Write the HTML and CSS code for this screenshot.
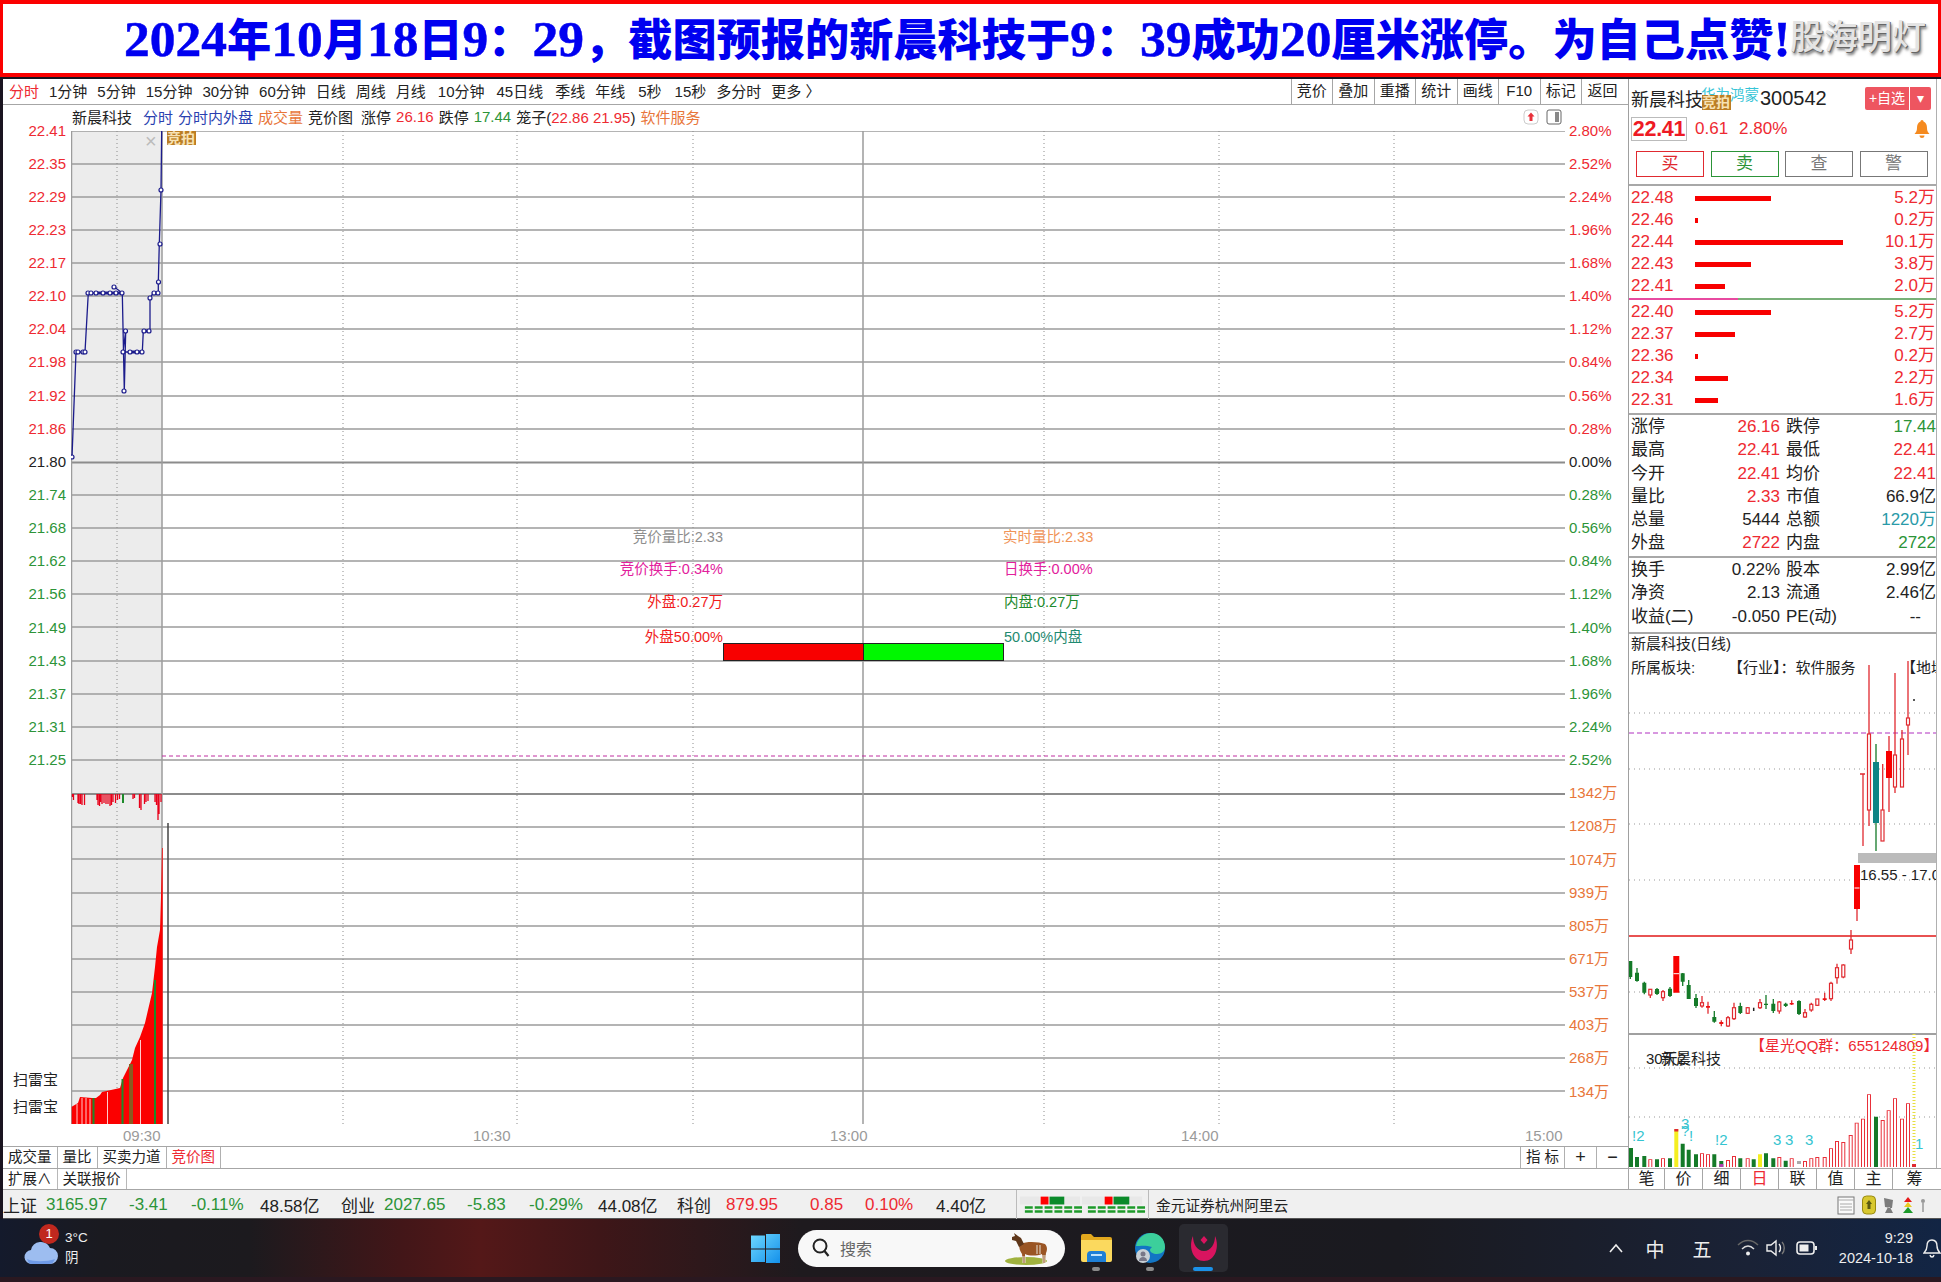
FILE: index.html
```html
<!DOCTYPE html>
<html lang="zh">
<head>
<meta charset="utf-8">
<title>新晨科技</title>
<link rel="stylesheet" href="styles.css">
</head>
<body>
<header class="banner">
  <h1 class="headline"><span class="n">2024</span>年<span class="n">10</span>月<span class="n">18</span>日<span class="n">9</span>：<span class="n">29</span>，截图预报的新晨科技于<span class="n">9</span>：<span class="n">39</span>成功<span class="n">20</span>厘米涨停。为自己点赞<span class="bang">!</span></h1>
  <span class="mark">股海明灯</span>
</header>
<div class="app">
  <div class="top">
    <section class="pane">
      <nav class="toolbar">
        <span class="r">分时</span><span>1分钟</span><span>5分钟</span><span>15分钟</span><span>30分钟</span><span>60分钟</span><span>日线</span><span>周线</span><span>月线</span><span class="shift">10分钟</span><span class="shift">45日线</span><span class="shift">季线</span><span>年线</span><span class="shift2">5秒</span><span class="shift2">15秒</span><span>多分时</span><span>更多 〉</span>
        <div class="tools"><span>竞价</span><span>叠加</span><span>重播</span><span>统计</span><span>画线</span><span>F10</span><span>标记</span><span>返回</span></div>
      </nav>
      <div class="infobar">
        <span class="i-name">新晨科技</span><span class="b i-wide">分时</span><span class="b">分时内外盘</span><span class="o">成交量</span><span>竞价图</span><span class="i-wide2">涨停</span><span class="r">26.16</span><span>跌停</span><span class="g">17.44</span><span>笼子(<span class="r">22.86 21.95</span>)</span><span class="o">软件服务</span>
        <div class="i-icons">
          <svg width="16" height="16" viewBox="0 0 16 16"><rect x="1" y="1" width="14" height="14" rx="4" fill="#fff" stroke="#ccc"/><path d="M8 3.5l3.5 4H9.5V12h-3V7.500H4.500z" fill="#e8303a"/></svg>
          <svg width="16" height="16" viewBox="0 0 16 16"><rect x="1" y="1" width="14" height="14" rx="2" fill="#fff" stroke="#666"/><rect x="9" y="3" width="4" height="10" fill="#888"/></svg>
        </div>
      </div>
      <div class="plot">
        <div class="axis axis-left">
          <span class="r">22.41</span><span class="r">22.35</span><span class="r">22.29</span><span class="r">22.23</span><span class="r">22.17</span><span class="r">22.10</span><span class="r">22.04</span><span class="r">21.98</span><span class="r">21.92</span><span class="r">21.86</span><span>21.80</span><span class="g">21.74</span><span class="g">21.68</span><span class="g">21.62</span><span class="g">21.56</span><span class="g">21.49</span><span class="g">21.43</span><span class="g">21.37</span><span class="g">21.31</span><span class="g">21.25</span>
          <div class="scan"><span>扫雷宝</span><span>扫雷宝</span></div>
        </div>
        <svg class="chart" width="1494" height="993" viewBox="71 131 1494 993">
          <rect x="71" y="131" width="91" height="993" fill="#ececec"/>
          <path d="M71 131H1565M71 164H1565M71 197H1565M71 230H1565M71 263H1565M71 296H1565M71 329H1565M71 362H1565M71 396H1565M71 429H1565M71 495H1565M71 528H1565M71 561H1565M71 594H1565M71 627H1565M71 661H1565M71 694H1565M71 727H1565M71 760H1565M71 827H1565M71 859H1565M71 893H1565M71 926H1565M71 959H1565M71 992H1565M71 1025H1565M71 1058H1565M71 1091H1565" stroke="#9c9c9c" stroke-width="1.400" fill="none"/>
          <path d="M71 462.500H1565M71 794H1565" stroke="#8c8c8c" stroke-width="2" fill="none"/>
          <path d="M117 131V1124M343 131V1124M517 131V1124M693 131V1124M1044 131V1124M1219 131V1124M1394 131V1124" stroke="#8c8c8c" stroke-dasharray="1 3" fill="none"/>
          <path d="M71.500 131V1124M162 131V1124M863 131V1124" stroke="#9c9c9c" stroke-width="1.500" fill="none"/>
          <path d="M162 756H1565" stroke="#c02fa0" stroke-dasharray="4 3" fill="none"/>
          <path d="M168 823V1124" stroke="#444" stroke-width="1.500"/>
          <text class="x-mark" x="145" y="148">×</text>
          <rect x="167" y="131" width="29" height="14" fill="#bb7d24"/>
          <text class="badge" x="167" y="143">竞拍</text>
          <path d="M72 457L76 352H85L88.300 293H122.300L114.300 287L122.300 293L124.300 391L125.700 331L123 352H142.300L143.300 331H150L150 298L153.300 293H158.300L158.300 282L159.300 244L161 190L161.700 130" fill="none" stroke="#1c1c8c" stroke-width="1.300"/>
          <path d="M94 293H120M128 352H141M144 331H149" stroke="#1c1c8c" stroke-width="3"/>
          <g fill="#fff" stroke="#1c1c8c" stroke-width="1.200">
            <circle cx="72" cy="457" r="2"/><circle cx="76" cy="352" r="2"/><circle cx="78" cy="352" r="2"/><circle cx="83" cy="352" r="2"/><circle cx="85" cy="352" r="2"/><circle cx="88" cy="293" r="2"/><circle cx="91" cy="293" r="2"/><circle cx="96" cy="293" r="2"/><circle cx="103" cy="293" r="2"/><circle cx="110" cy="293" r="2"/><circle cx="114" cy="287" r="2"/><circle cx="116" cy="293" r="2"/><circle cx="122" cy="293" r="2"/><circle cx="124" cy="391" r="2"/><circle cx="125.500" cy="331" r="2"/><circle cx="123" cy="352" r="2"/><circle cx="130" cy="352" r="2"/><circle cx="137" cy="352" r="2"/><circle cx="142" cy="352" r="2"/><circle cx="144" cy="331" r="2"/><circle cx="149" cy="331" r="2"/><circle cx="150" cy="298" r="2"/><circle cx="154" cy="293" r="2"/><circle cx="158" cy="293" r="2"/><circle cx="158.500" cy="282" r="2"/><circle cx="160" cy="244" r="2"/><circle cx="161" cy="190" r="2"/>
          </g>
          <path d="M72.500 794v3M73.500 794v6M78 794v9M79 794v10M80.500 794v10M82 794v11M84.500 794v11M97 794v6M98 794v11M99.500 794v12M100.500 794v8M102 794v10M104 794v9M106 794v10M108 794v10M110 794v12M111.500 794v11M113 794v8M115.500 794v9M117.500 794v6M119.500 794v5M133 794v5M134.500 794v4M139.500 794v14M141 794v16M144.500 794v10M146 794v8M148 794v7M155 794v8M156.500 794v11M158 794v26M159 794v20M161 794v8" stroke="#e8001a" stroke-width="1.300" fill="none"/>
          <rect x="122" y="794" width="2" height="9" fill="#1d8a2a"/>
          <polygon points="71.700,1106.700 78,1103 80,1097 92,1098 96,1098 100,1095 102,1092 120,1088 123,1078 127,1070 132,1060 135,1048 140,1037 145,1023 148,1010 152,993 155,967 157,947 160,930 161,897 162,848 162.700,848 162.700,1124 71.700,1124" fill="#fb0000"/>
          <path d="M77 1104V1124M82 1098V1124M86 1098V1124M90 1099V1124M107.500 1092V1124M140.500 1040V1124" stroke="#fff" stroke-width=".8" fill="none"/>
          <path d="M93.500 1098V1124M122.500 1079V1124M155 980V1124" stroke="#1d8a2a" stroke-width="2" fill="none"/>
          <rect x="129" y="1064" width="4" height="60" fill="#8a5a20"/>
          <text class="s-gray" x="723" y="542">竞价量比:2.33</text>
          <text class="s-pink" x="723" y="574">竞价换手:0.34%</text>
          <text class="s-red" x="723" y="607">外盘:0.27万</text>
          <text class="s-red" x="723" y="642">外盘50.00%</text>
          <text class="s-orange" x="1003" y="542">实时量比:2.33</text>
          <text class="s-pink2" x="1004" y="574">日换手:0.00%</text>
          <text class="s-green" x="1004" y="607">内盘:0.27万</text>
          <text class="s-teal" x="1004" y="642">50.00%内盘</text>
          <rect x="723.500" y="643.500" width="140" height="17" fill="#f80000" stroke="#222"/>
          <rect x="863.500" y="643.500" width="140" height="17" fill="#00f800" stroke="#222"/>
        </svg>
        <div class="axis axis-right">
          <span class="r">2.80%</span><span class="r">2.52%</span><span class="r">2.24%</span><span class="r">1.96%</span><span class="r">1.68%</span><span class="r">1.40%</span><span class="r">1.12%</span><span class="r">0.84%</span><span class="r">0.56%</span><span class="r">0.28%</span><span>0.00%</span><span class="g">0.28%</span><span class="g">0.56%</span><span class="g">0.84%</span><span class="g">1.12%</span><span class="g">1.40%</span><span class="g">1.68%</span><span class="g">1.96%</span><span class="g">2.24%</span><span class="g">2.52%</span><span class="o">1342万</span><span class="o">1208万</span><span class="o">1074万</span><span class="o">939万</span><span class="o">805万</span><span class="o">671万</span><span class="o">537万</span><span class="o">403万</span><span class="o">268万</span><span class="o">134万</span>
        </div>
      </div>
      <div class="timeaxis"><span>09:30</span><span>10:30</span><span>13:00</span><span>14:00</span><span>15:00</span></div>
      <div class="tabs">
        <span>成交量</span><span>量比</span><span>买卖力道</span><span class="r">竞价图</span>
        <div class="tabs-end"><span class="t-ind">指 标</span><span class="t-btn">+</span><span class="t-btn">−</span></div>
      </div>
    </section>
    <aside class="side">
      <div class="s-head">
        <span class="s-name">新晨科技</span>
        <span class="s-tag">华为鸿蒙<span class="s-badge">竞拍</span></span>
        <span class="s-code">300542</span>
        <span class="s-add"><span class="s-add-l">+自选</span><span class="s-add-r">▾</span></span>
      </div>
      <div class="s-price">
        <span class="s-last">22.41</span><span class="r">0.61</span><span class="r">2.80%</span>
        <svg class="s-bell" width="16" height="20" viewBox="0 0 16 20"><path d="M8 1c1 0 1.500.8 1.500 1.600C12 3.500 13 6 13 9c0 3 1 4.500 2.500 6H.5C2 13.500 3 12 3 9c0-3 1-5.500 3.500-6.400C6.500 1.800 7 1 8 1zM5.500 16.500h5C10.300 18.300 9.300 19 8 19s-2.300-.7-2.500-2.500z" fill="#f58a1f"/></svg>
      </div>
      <div class="s-btns"><span class="btn-buy">买</span><span class="btn-sell">卖</span><span class="btn-gray">查</span><span class="btn-gray">警</span></div>
      <div class="book">
        <div class="row"><span>22.48</span><i style="width:76px"></i><span class="v">5.2万</span></div>
        <div class="row"><span>22.46</span><i style="width:3px"></i><span class="v">0.2万</span></div>
        <div class="row"><span>22.44</span><i style="width:148px"></i><span class="v">10.1万</span></div>
        <div class="row"><span>22.43</span><i style="width:56px"></i><span class="v">3.8万</span></div>
        <div class="row"><span>22.41</span><i style="width:30px"></i><span class="v">2.0万</span></div>
      </div>
      <div class="book-sep"></div>
      <div class="book">
        <div class="row"><span>22.40</span><i style="width:76px"></i><span class="v">5.2万</span></div>
        <div class="row"><span>22.37</span><i style="width:40px"></i><span class="v">2.7万</span></div>
        <div class="row"><span>22.36</span><i style="width:3px"></i><span class="v">0.2万</span></div>
        <div class="row"><span>22.34</span><i style="width:33px"></i><span class="v">2.2万</span></div>
        <div class="row"><span>22.31</span><i style="width:23px"></i><span class="v">1.6万</span></div>
      </div>
      <div class="stats first">
        <span>涨停</span><span class="val r">26.16</span><span class="l2">跌停</span><span class="val g">17.44</span>
        <span>最高</span><span class="val r">22.41</span><span class="l2">最低</span><span class="val r">22.41</span>
        <span>今开</span><span class="val r">22.41</span><span class="l2">均价</span><span class="val r">22.41</span>
        <span>量比</span><span class="val r">2.33</span><span class="l2">市值</span><span class="val">66.9亿</span>
        <span>总量</span><span class="val">5444</span><span class="l2">总额</span><span class="val teal">1220万</span>
        <span>外盘</span><span class="val r">2722</span><span class="l2">内盘</span><span class="val g">2722</span>
      </div>
      <div class="stats second">
        <span>换手</span><span class="val">0.22%</span><span class="l2">股本</span><span class="val">2.99亿</span>
        <span>净资</span><span class="val">2.13</span><span class="l2">流通</span><span class="val">2.46亿</span>
        <span>收益(二)</span><span class="val">-0.050</span><span class="l2">PE(动)</span><span class="val dash">--</span>
      </div>
      <div class="kchart">
        <svg class="kplot" width="308" height="535" viewBox="1628 632 308 535">
          <path d="M1628 712H1936M1628 768H1936M1628 823H1936M1628 879H1936M1628 991H1936M1628 1067H1936M1628 1116H1936" stroke="#999" stroke-dasharray="1 4" fill="none"/>
          <path d="M1628 732H1936" stroke="#b030c0" stroke-dasharray="5 3" fill="none"/>
          <path d="M1628 935H1936" stroke="#e01818" stroke-width="1.300"/>
          <path d="M1628 1033H1936" stroke="#a0a0a0" stroke-width="2"/>
          <rect x="1857" y="852" width="79" height="10" fill="#bbb"/>
          <path d="M1862 773V845M1859 773H1864M1868 664V825M1881.700 763V840M1888 735V811M1894 672V792M1901 729V786M1907 660V754M1856 908V920M1850 929V953M1649.300 988V997M1662 989V1000M1701 995V1006.700M1727 1015V1026M1733 1001.700V1019M1746.700 1006V1013M1759 998V1008M1778.300 1000V1012.700M1804 1008V1017M1810.300 1001.700V1010.700M1816.300 998V1005M1830 980.700V1000M1836 962.700V982.700M1842.300 963.300V977.300M1707 1000.700V1012.700M1720.300 1019.300V1025.300M1790.700 999.300V1004M1823.700 991.700V1000" stroke="#e02a30" stroke-width="1.300" fill="none"/>
          <path d="M1875 743V850M1629.300 960V978M1636 967V980.700M1643.300 980.700V993.300M1656 987V994M1669 986V996M1681.700 972V985M1687.700 979V998M1695 993V1007M1713.300 1010V1021.700M1739.300 1001.700V1013M1765 994V1008M1772.300 998V1012M1784.700 1001.700V1006M1798 999.300V1014" stroke="#147a28" stroke-width="1.300" fill="none"/>
          <path d="M1875 761V822" stroke="#0e8585" stroke-width="6"/>
          <path d="M1629.300 960V976M1636 971.700V980M1643.300 981.700V991.700M1656 988V993M1669 987.700V995M1681.700 972.300V980.700M1687.700 984V998M1695 997V1005M1713.300 1016V1020.700M1739.300 1005V1012M1765 1002.700V1004M1772.300 1002.700V1010M1784.700 1002.700V1005M1798 1000V1013" stroke="#147a28" stroke-width="4" fill="none"/>
          <path d="M1888 750V777M1856 864V908M1675.300 955V991.700" stroke="#f80000" stroke-width="6" fill="none"/>
          <path d="M1707 1005V1006.700M1720.300 1021V1023M1790.700 1002V1003.500M1823.700 997.300V999" stroke="#f01010" stroke-width="4" fill="none"/>
          <path d="M1853.500 887H1858.500M1672.500 972.700H1678" stroke="#fff" fill="none"/>
          <path d="M1752.700 1006.700V1010" stroke="#222" stroke-width="1.500"/>
          <circle cx="1913" cy="699" r="1" fill="#222"/>
          <g fill="#fff" stroke="#e02a30" stroke-width="1.200">
            <rect x="1866.500" y="733" width="3" height="76"/><rect x="1880" y="809" width="3" height="31"/><rect x="1892.500" y="754" width="3" height="32"/><rect x="1899.500" y="738" width="3" height="48"/><rect x="1905.500" y="717" width="3" height="7"/><rect x="1848.500" y="939" width="3" height="9"/><rect x="1647.800" y="988.300" width="3" height="5.700"/><rect x="1660.500" y="990.700" width="3" height="6"/><rect x="1699.500" y="1001.700" width="3" height="3.300"/><rect x="1725.500" y="1016.700" width="3" height="8.300"/><rect x="1731.500" y="1006.700" width="3" height="11"/><rect x="1745.200" y="1006.700" width="3" height="5.600"/><rect x="1757.500" y="1001.700" width="3" height="5"/><rect x="1776.800" y="1001" width="3" height="9"/><rect x="1802.500" y="1011.700" width="3" height="4.300"/><rect x="1808.800" y="1003.300" width="3" height="5.700"/><rect x="1814.800" y="998" width="3" height="6.300"/><rect x="1828.500" y="982.300" width="3" height="15.400"/><rect x="1834.500" y="966.700" width="3" height="10"/><rect x="1840.800" y="964" width="3" height="12"/>
          </g>
          <path d="M1630 1166V1147M1636 1166V1156M1643.300 1166V1155M1656 1166V1158.300M1669 1166V1157.300M1681.700 1166V1142.700M1687.700 1166V1148.700M1695 1166V1153.300M1713.300 1166V1153.300M1720.300 1166V1160M1739.300 1166V1157.300M1752.700 1166V1158.300M1765 1166V1152.300M1772.300 1166V1157.300M1784.700 1166V1159.700M1875 1166V1115.700" stroke="#147a28" stroke-width="4" fill="none"/>
          <path d="M1649.300 1166V1158.300M1662 1166V1157.300M1701 1166V1152.300M1707 1166V1153.300M1727 1166V1159M1733 1166V1155M1746.700 1166V1157.300M1778.300 1166V1156M1790.700 1166V1157.300M1804 1166V1160M1810.300 1166V1157.300M1816.300 1166V1156M1823.700 1166V1156M1830 1166V1147.300M1836 1166V1140M1842.300 1166V1141M1849.700 1166V1134M1855.700 1166V1121.700M1862 1166V1117.700M1868 1166V1093.300M1881.700 1166V1119M1887.700 1166V1109.300M1894 1166V1097.300M1901 1166V1117.700M1907 1166V1102.300" stroke="#e8303a" stroke-width="4" fill="none"/>
          <path d="M1649.300 1166V1159M1662 1166V1158M1701 1166V1153M1707 1166V1154M1727 1166V1160M1733 1166V1156M1746.700 1166V1158M1778.300 1166V1157M1790.700 1166V1158M1804 1166V1161M1810.300 1166V1158M1816.300 1166V1157M1823.700 1166V1157M1830 1166V1148M1836 1166V1141M1842.300 1166V1142M1849.700 1166V1135M1855.700 1166V1122.500M1862 1166V1118.500M1868 1166V1094M1881.700 1166V1120M1887.700 1166V1110M1894 1166V1098M1901 1166V1118.500M1907 1166V1103" stroke="#fff" stroke-width="2" fill="none"/>
          <path d="M1675.300 1166V1128.300M1759 1166V1153.300" stroke="#f5ee20" stroke-width="4" fill="none"/>
          <path d="M1675.300 1130.500V1128M1913 1166V1163" stroke="#e02a30" stroke-width="4" fill="none"/>
          <path d="M1798 1163V1160" stroke="#aaa" stroke-width="4"/>
          <path d="M1720.300 1166V1163" stroke="#b040b0" stroke-width="4"/>
          <path d="M1913 1033V1160" stroke="#e8e040" stroke-width="3" stroke-dasharray="1 2" fill="none"/>
          <text class="k-mark" x="1631" y="1140">!2</text><text class="k-mark" x="1680" y="1128">3</text><text class="k-mark" x="1680" y="1135">?</text><text class="k-mark" x="1688" y="1140">!</text><text class="k-mark" x="1714" y="1144">!2</text><text class="k-mark" x="1772" y="1144">3</text><text class="k-mark" x="1784" y="1144">3</text><text class="k-mark" x="1804" y="1144">3</text><text class="k-mark" x="1914" y="1148">1</text>
          <text class="k-range" x="1859" y="879">16.55 - 17.0</text>
          <text class="k-qq" x="1749" y="1050">【星光QQ群：655124809】</text>
          <text class="k-name" x="1645" y="1063">30天2</text>
          <text class="k-name" x="1660" y="1063">新晨科技</text>
        </svg>
        <div class="k-head">
          <div class="k-title">新晨科技(日线)</div>
          <div class="k-sector"><span class="k-s1">所属板块:</span><span class="k-s2">【行业】：软件服务</span><span>【地域</span></div>
        </div>
      </div>
    </aside>
  </div>
  <div class="extend">
    <span>扩展∧</span><span>关联报价</span>
    <div class="ext-tabs"><span>笔</span><span>价</span><span>细</span><span class="r">日</span><span>联</span><span>值</span><span>主</span><span>筹</span></div>
  </div>
  <div class="indexbar">
    <span>上证</span><span class="g">3165.97</span><span class="g">-3.41</span><span class="g">-0.11%</span><span>48.58亿</span>
    <span>创业</span><span class="g">2027.65</span><span class="g">-5.83</span><span class="g">-0.29%</span><span>44.08亿</span>
    <span>科创</span><span class="r">879.95</span><span class="r">0.85</span><span class="r">0.10%</span><span>4.40亿</span>
    <svg class="signal" width="133" height="26" viewBox="0 0 133 26">
      <path d="M3 5h20v8H3zM66 5h22v8H66zM48 5h16v8H48zM111 5h16v8h-16z" fill="#e8e8e8"/>
      <rect x="24" y="5" width="8" height="8" fill="#f00"/><rect x="33" y="5" width="15" height="8" fill="#0a8a2a"/><rect x="89" y="5" width="8" height="8" fill="#f00"/><rect x="98" y="5" width="16" height="8" fill="#0a8a2a"/>
      <path d="M8 16H66M72 16H130M8 20H66M72 20H130" stroke="#1d9a2a" stroke-width="2.500" stroke-dasharray="8 2" fill="none"/>
    </svg>
    <span class="broker">金元证券杭州阿里云</span>
    <div class="st-icons">
      <svg width="20" height="20" viewBox="0 0 20 20"><rect x="2" y="2" width="16" height="17" fill="#fafafa" stroke="#777"/><path d="M2 5H18M4 9H16M4 12H16M4 15H16" stroke="#aaa"/></svg>
      <svg width="16" height="20" viewBox="0 0 16 20"><rect x="1.500" y="1" width="13" height="18" rx="4" fill="#d8c830" stroke="#998a10"/><path d="M8 5l3 4H9.500v5h-3V9H5z" fill="#5a5a10"/></svg>
      <svg width="14" height="20" viewBox="0 0 14 20"><path d="M2 3l9 2-1 8-7-1zM6 12L3 18h8l-3-6" fill="#7c7c7c"/></svg>
      <svg width="14" height="20" viewBox="0 0 14 20"><path d="M7 2l4 5H3z" fill="#e61a1a"/><path d="M7 7l4 5H3z" fill="#e8cc20"/><path d="M7 12l5 6H2z" fill="#1d9a2a"/></svg>
      <svg width="6" height="20" viewBox="0 0 6 20"><circle cx="3" cy="6" r="2" fill="#999"/><path d="M3 8v9" stroke="#999" stroke-width="1.500"/></svg>
    </div>
  </div>
</div>
<footer class="taskbar">
  <div class="weather">
    <svg class="w-cloud" width="34" height="30" viewBox="0 0 34 30"><path d="M8 28a7 7 0 0 1-1-14 10 10 0 0 1 19-2 8 8 0 0 1 0 16z" fill="#9dbdf0"/><path d="M3 23c6 3 20 3 28 0-1 3-3 5-6 5H8c-3 0-4-2-5-5z" fill="#6f9be8"/></svg>
    <span class="w-badge">1</span>
    <div class="w-text"><span>3°C</span><span>阴</span></div>
  </div>
  <svg class="win" width="29" height="29" viewBox="0 0 29 29">
    <defs><linearGradient id="wg" x1="0" y1="0" x2="1" y2="1"><stop offset="0" stop-color="#6fd8ff"/><stop offset="1" stop-color="#1390ea"/></linearGradient></defs>
    <path d="M0 1.500h14v13H0zM15 0h14v14.500H15zM0 15.500h14v12.500H0zM15 15.500h14V29H15z" fill="url(#wg)"/>
  </svg>
  <div class="search">
    <svg width="20" height="22" viewBox="0 0 20 22"><circle cx="9" cy="9" r="6.500" fill="none" stroke="#222" stroke-width="2"/><path d="M13.500 14l4 5" stroke="#222" stroke-width="2.200"/></svg>
    <span>搜索</span>
    <svg class="okapi" width="66" height="37" viewBox="0 0 66 37">
      <ellipse cx="27" cy="31" rx="21" ry="4" fill="#a0b23e"/>
      <path d="M22 14C28 11 40 12 46 14C49 17 48 21 47 23L46 33H44L43 24C38 26 30 26 26 24L26 33H24L23 24C21 21 20 18 20 14z" fill="#9a5524"/>
      <path d="M20 17L17 11L13 10L13 7L16 6L15 3L19 6L22 8L25 14z" fill="#5e3619"/>
      <path d="M24 26v7M26 26v7M44 25v8M46 25v8M38 15v9M41 15v9" stroke="#e8e4d8" stroke-width="1" fill="none"/>
    </svg>
  </div>
  <div class="apps">
    <div class="app-i">
      <svg width="31" height="28" viewBox="0 0 31 28"><path d="M0 2a2 2 0 0 1 2-2h8l3 3h16a2 2 0 0 1 2 2v4H0z" fill="#e2a81e"/><path d="M0 6h31v20a2 2 0 0 1-2 2H2a2 2 0 0 1-2-2z" fill="#fbd95e"/><path d="M6 28v-7a4 4 0 0 1 4-4h11a4 4 0 0 1 4 4v7z" fill="#1e7fd6"/><rect x="10" y="20" width="11" height="2" fill="#bfe2fb"/></svg>
      <i class="dot"></i>
    </div>
    <div class="app-i">
      <svg width="32" height="32" viewBox="0 0 32 32"><circle cx="16" cy="16" r="15" fill="#1275c4"/><path d="M2 14C4 5 11 1 17 1c8 0 14 6 14 14 0 4-3 7-8 7-4 0-7-2-7-4 0-1 1-2 2-3-6-2-12-1-16-1z" fill="#3ccf9b"/><circle cx="9" cy="24" r="7" fill="#c9d0d6"/><circle cx="9" cy="22" r="2.500" fill="#778"/><path d="M5 29c0-3 2-4 4-4s4 1 4 4" fill="#778"/></svg>
      <i class="dot"></i>
    </div>
    <div class="app-i active">
      <svg width="34" height="34" viewBox="0 0 34 34"><path d="M6 5C1 16 6 30 17 30c11 0 16-14 11-25 0 8-4 15-11 15S6 13 6 5z" fill="#d9145f"/><path d="M17 5l3.500 4L17 13l-3.500-4z" fill="#d9145f"/></svg>
      <i class="bar"></i>
    </div>
  </div>
  <div class="tray">
    <svg class="t-chev" width="14" height="10" viewBox="0 0 14 10"><path d="M1 9l6-7 6 7" stroke="#eee" stroke-width="1.600" fill="none"/></svg>
    <span class="t-ime t-zh">中</span>
    <span class="t-ime t-wu">五</span>
    <svg class="t-wifi" width="22" height="18" viewBox="0 0 22 18"><path d="M1 6c6-6 14-6 20 0" stroke="#666" stroke-width="1.500" fill="none"/><path d="M5 10c4-4 8-4 12 0" stroke="#ddd" stroke-width="1.500" fill="none"/><circle cx="11" cy="14.500" r="2" fill="#eee"/></svg>
    <svg class="t-spk" width="22" height="18" viewBox="0 0 22 18"><path d="M1 6h4l5-4v14l-5-4H1z" fill="none" stroke="#eee" stroke-width="1.400"/><path d="M13 5c2 2 2 6 0 8" stroke="#eee" stroke-width="1.400" fill="none"/><path d="M16 3c3 3 3 9 0 12" stroke="#777" stroke-width="1.400" fill="none"/></svg>
    <svg class="t-bat" width="22" height="14" viewBox="0 0 22 14"><rect x="1" y="1" width="17" height="12" rx="3" fill="none" stroke="#eee" stroke-width="1.600"/><rect x="3.500" y="3.500" width="9" height="7" fill="#eee"/><rect x="19" y="5" width="2" height="4" fill="#eee"/></svg>
    <div class="clock"><span>9:29</span><span>2024-10-18</span></div>
    <svg class="t-bell" width="18" height="20" viewBox="0 0 18 20"><path d="M9 2c-3.500 0-5 3-5 6 0 3-1 5-3 7h16c-2-2-3-4-3-7 0-3-1.500-6-5-6zM7 17c.3 1.300 1 2 2 2s1.700-.7 2-2" fill="none" stroke="#eee" stroke-width="1.400"/></svg>
  </div>
</footer>
</body>
</html>
```

FILE: styles.css
```css
* { box-sizing: border-box; }
html, body { margin: 0; padding: 0; }
body {
  width: 1941px;
  height: 1282px;
  overflow: hidden;
  background: #1a1420;
  font-family: "Liberation Sans", "Noto Sans CJK SC", sans-serif;
  font-size: 15px;
  color: #222;
}
.r { color: #ee2a32; }
.g { color: #2c9438; }
.o { color: #e8763a; }
.b { color: #2a3fb0; }
.teal { color: #2a9aa8; }

.banner {
  position: relative;
  height: 77px;
  background: #fff;
  border: solid #fb0000;
  border-width: 4px 3px 4px 3px;
  display: flex;
  align-items: center;
  padding-left: 121px;
}
.headline {
  margin: 0;
  font-family: "Noto Sans CJK SC", sans-serif;
  font-weight: 900;
  font-size: 44.200px;
  line-height: 1;
  color: #0000f0;
  white-space: nowrap;
}
.headline .n, .headline .bang {
  font-family: "Liberation Serif", serif;
  font-weight: 700;
  font-size: 51.500px;
  -webkit-text-stroke: .5px #0000f0;
}
.mark {
  position: absolute;
  right: 12px;
  top: 7px;
  font-family: "Noto Sans CJK SC", sans-serif;
  font-size: 34px;
  font-weight: 500;
  line-height: 48px;
  color: #e4e4e4;
  text-shadow: 1px 1px 0 #666, 2px 3px 3px #777;
}

.app {
  margin: 2px 0 0 3px;
  height: 1140px;
  background: #fff;
}
.top { display: flex; height: 1089px; }
.pane { width: 1625px; display: flex; flex-direction: column; }

.toolbar {
  height: 26px;
  display: flex;
  align-items: center;
  gap: 10px;
  padding: 0 0 2px 6px;
  white-space: nowrap;
  border-bottom: 1px solid #a6a6a6;
}
.shift { margin-left: 2px; }
.shift2 { margin-left: 3px; }
.tools { margin-left: auto; display: flex; height: 25px; margin-bottom: -2px; }
.tools span {
  width: 41.500px;
  border-left: 1px solid #a6a6a6;
  text-align: center;
  line-height: 23px;
}
.tools span:last-child { width: 47px; padding-right: 5px; }

.infobar {
  height: 26px;
  display: flex;
  align-items: center;
  gap: 5px;
  padding: 0 0 3px 69px;
  white-space: nowrap;
}
.i-name { margin-right: 1px; }
.i-wide { margin-left: 5px; }
.i-wide2 { margin-left: 3px; }
.i-icons { margin-left: auto; display: flex; gap: 7px; padding-right: 66px; }

.plot { display: grid; grid-template-columns: 68px 1494px 63px; height: 993px; }
.chart { display: block; }
.chart text { font-size: 14.500px; }
.chart .x-mark { fill: #bbb; font-size: 20px; }
.chart .badge { fill: #f7e2b4; font-weight: 700; font-size: 14px; }
.s-gray, .s-pink, .s-red { text-anchor: end; }
.s-gray { fill: #8e8e8e; }
.s-pink { fill: #e2209c; }
.s-pink2 { fill: #e2209c; }
.s-red { fill: #f01c1c; }
.s-orange { fill: #f09458; }
.s-green { fill: #1e8a2c; }
.s-teal { fill: #1f8a70; }

.axis {
  display: flex;
  flex-direction: column;
  height: 993px;
  margin-top: -17.500px;
}
.axis > span {
  flex: none;
  height: 33.150px;
  line-height: 33.150px;
  white-space: nowrap;
}
.axis-left { text-align: right; padding-right: 5px; }
.scan {
  margin-top: auto;
  display: flex;
  flex-direction: column;
  padding: 0 8px 0 0;
  margin-bottom: -13.500px;
}
.scan span { height: 27px; line-height: 27px; }
.axis-right { padding-left: 4px; }

.timeaxis {
  height: 23px;
  display: grid;
  grid-template-columns: 350px 357px 351px 344px 1fr;
  padding-left: 120px;
  line-height: 23px;
  color: #9a9a9a;
  border-bottom: 1px solid #a6a6a6;
}
.tabs {
  height: 21px;
  display: flex;
  line-height: 21px;
  font-size: 14.500px;
}
.tabs > span {
  padding: 0 5px;
  border-right: 1px solid #b0b0b0;
  white-space: nowrap;
}
.tabs-end { margin-left: auto; display: flex; }
.t-ind { width: 44px; text-align: center; border-left: 1px solid #b0b0b0; }
.t-btn { width: 32px; text-align: center; border-left: 1px solid #b0b0b0; font-size: 18px; }

.side {
  width: 309px;
  border-left: 1px solid #a0a0a0;
  border-right: 1px solid #b0b0b0;
  display: flex;
  flex-direction: column;
}
.s-head {
  height: 38px;
  display: flex;
  align-items: center;
  padding-left: 2px;
  white-space: nowrap;
}
.s-name { font-size: 18px; width: 70px; }
.s-tag {
  position: relative;
  width: 59px;
  font-size: 14.500px;
  color: #35c4d6;
  align-self: flex-start;
  padding-top: 4px;
}
.s-badge {
  position: absolute;
  left: 1px;
  top: 16px;
  width: 29px;
  height: 15px;
  line-height: 15px;
  font-size: 14px;
  font-weight: 700;
  color: #f7e2b4;
  background: #bb7d24;
}
.s-code { font-size: 20px; width: 105px; }
.s-add { display: flex; height: 23px; line-height: 23px; color: #fff; background: #ee5560; border-radius: 2px; font-size: 14px; }
.s-add-l { width: 45px; text-align: center; border-right: 1px solid #fff; }
.s-add-r { width: 21px; text-align: center; }
.s-price {
  height: 24px;
  display: flex;
  align-items: center;
  padding-left: 2px;
  gap: 11px;
  font-size: 17px;
}
.s-last {
  font-size: 21.500px;
  font-weight: 700;
  color: #ee1a24;
  border: 1px solid #bbb;
  width: 56px;
  height: 24px;
  line-height: 23px;
  text-align: center;
  margin-right: -3px;
  letter-spacing: -.3px;
}
.s-bell { margin-left: auto; margin-right: 6px; }
.s-btns {
  display: grid;
  grid-template-columns: repeat(4, 68px);
  gap: 6.500px;
  padding: 10px 0 7px 7px;
  border-bottom: 2px solid #a8a8a8;
  height: 45px;
}
.s-btns span {
  text-align: center;
  line-height: 23px;
  font-size: 17px;
  height: 26px;
  border: 1px solid #777;
  color: #777;
}
.s-btns .btn-buy { border-color: #e02a30; color: #e02a30; }
.s-btns .btn-sell { border-color: #2c9438; color: #2c9438; }

.book { color: #ee2a32; font-size: 17px; padding-top: 1px; }
.row {
  height: 22px;
  line-height: 22px;
  display: flex;
  align-items: center;
  padding-left: 2px;
}
.row > span { height: 22px; }
.row > span:first-child { width: 64px; }
.row i { height: 5px; background: #f80000; }
.row .v { margin-left: auto; padding-right: 1px; }
.book-sep {
  height: 2px;
  margin-top: 1px;
  background: linear-gradient(90deg, #e84aa0 0, #e84aa0 109px, #78b078 109px);
}

.stats {
  display: grid;
  grid-template-columns: 50px 99px 56px 1fr;
  padding-left: 2px;
  font-size: 17px;
  grid-auto-rows: 23.300px;
  line-height: 23.300px;
  white-space: nowrap;
}
.stats .val { text-align: right; }
.stats .l2 { padding-left: 6px; }
.stats .dash { padding-right: 15px; }
.first { border-top: 2px solid #a8a8a8; height: 143px; margin-top: 2px; }
.second { border-top: 2px solid #a8a8a8; height: 76px; }

.kchart {
  flex: 1;
  display: grid;
  overflow: hidden;
  border-top: 2px solid #a8a8a8;
}
.kplot, .k-head { grid-area: 1 / 1; }
.kplot { display: block; margin-top: -1px; }
.k-head { padding-left: 2px; height: 50px; white-space: nowrap; }
.k-title { line-height: 24px; margin-top: -2px; font-size: 15px; }
.k-sector { display: flex; font-size: 15px; line-height: 24px; }
.k-s1 { width: 97px; }
.k-s2 { width: 173px; }
.k-mark { fill: #35c4d0; font-size: 15px; }
.k-range { fill: #222; font-size: 15px; }
.k-qq { fill: #ee2a32; font-size: 15px; }
.k-name { fill: #222; font-size: 15px; }

.extend {
  height: 22px;
  display: flex;
  border-top: 1px solid #a6a6a6;
  border-bottom: 1px solid #a6a6a6;
  line-height: 20px;
  font-size: 14.500px;
}
.extend > span { padding: 0 5px; border-right: 1px solid #b8b8b8; white-space: nowrap; }
.ext-tabs { margin-left: auto; margin-right: 5px; display: grid; grid-template-columns: 36px repeat(6, 38px) 44px; font-size: 16px; width: 308px; }
.ext-tabs span { text-align: center; border-left: 1px solid #a6a6a6; }

.indexbar {
  height: 29px;
  background: #f0f0f0;
  display: grid;
  grid-template-columns: 43px 83px 62px 69px 81px 43px 83px 62px 69px 79px 49px 84px 55px 71px 80px 140px 400px 1fr;
  align-items: center;
  font-size: 17px;
  white-space: nowrap;
  border-bottom: 1px solid #555;
}
.signal { border-left: 1px solid #bbb; border-right: 1px solid #bbb; height: 29px; }
.broker { font-size: 14.700px; }
.st-icons { display: flex; align-items: center; gap: 5px; justify-content: flex-end; padding-right: 15px; }

.taskbar {
  height: 63px;
  display: flex;
  align-items: center;
  padding-bottom: 5px;
  color: #eee;
  background:
    linear-gradient(180deg, rgba(0,0,0,0) 58px, #2a1820 58px),
    linear-gradient(90deg, #141a2c 0, #1a1a20 100px, #1c1a1e 250px, #421618 400px, #541818 480px, #3e1618 600px, #1e1a1e 800px, #1a1a20 1400px, #1a2236 1750px, #122544 1941px);
}
.weather { position: relative; width: 751px; display: flex; align-items: center; padding-left: 24px; flex: none; }
.w-cloud { margin-top: 5px; }
.w-badge {
  position: absolute;
  left: 39px;
  top: -4px;
  width: 20px;
  height: 20px;
  border-radius: 50%;
  background: #c0281e;
  color: #fff;
  font-size: 13px;
  text-align: center;
  line-height: 20px;
}
.w-text { display: flex; flex-direction: column; margin-left: 7px; font-size: 13.500px; line-height: 20px; }
.win { flex: none; }
.search {
  margin-left: 18px;
  width: 267px;
  height: 37px;
  border-radius: 19px;
  background: #f8f8f8;
  display: flex;
  align-items: center;
  padding-left: 13px;
  gap: 9px;
  color: #666;
  font-size: 16px;
  overflow: hidden;
  flex: none;
}
.okapi { margin-left: auto; }
.apps { display: flex; align-items: center; margin-left: 4px; height: 48px; flex: none; }
.app-i {
  position: relative;
  width: 54px;
  height: 48px;
  display: flex;
  align-items: center;
  justify-content: center;
}
.app-i.active { background: #2a2a30; border-radius: 5px; width: 49px; margin-left: 2px; }
.dot { position: absolute; left: 23px; bottom: 1px; width: 8px; height: 4px; border-radius: 2px; background: #8a8a8a; }
.bar { position: absolute; left: 14px; bottom: 1px; width: 20px; height: 4px; border-radius: 2px; background: #1b92e8; }
.tray { margin-left: auto; display: flex; align-items: center; flex: none; }
.t-ime { font-size: 19px; width: 34px; text-align: center; }
.t-zh { margin-left: 15px; }
.t-wu { margin-left: 13px; }
.t-wifi { margin-left: 18px; }
.t-spk { margin-left: 7px; }
.t-bat { margin-left: 8px; }
.clock { display: flex; flex-direction: column; align-items: flex-end; font-size: 14.500px; line-height: 20px; margin-left: 19px; width: 76px; }
.t-bell { margin-left: 10px; }
```
